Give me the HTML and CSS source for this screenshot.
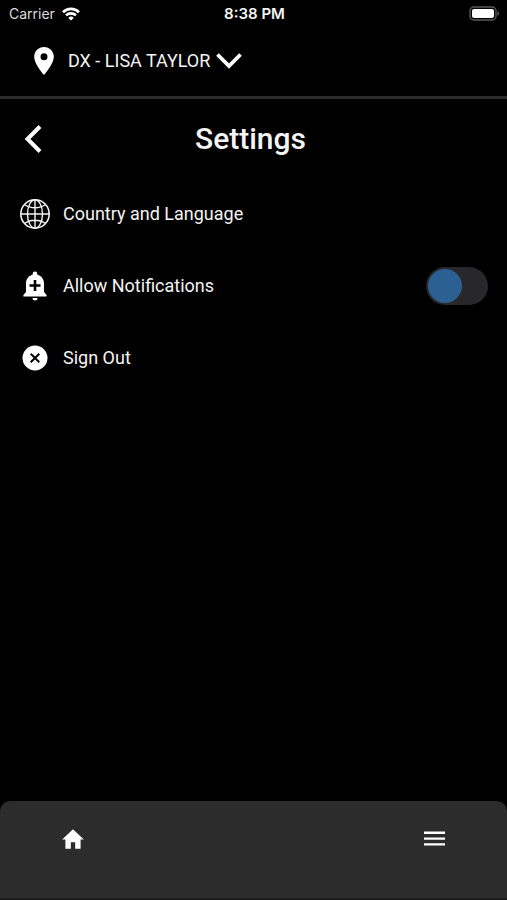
FILE: index.html
```html
<!DOCTYPE html>
<html lang="en">
<head>
    <meta charset="UTF-8">
    <meta name="viewport" content="width=device-width, initial-scale=1.0">
    <title>Settings</title>
    <link rel="stylesheet" href="styles.css">
</head>
<body>
    <!-- Status bar -->
    <div class="status-bar">
        <div class="carrier">
            <span>Carrier</span>
            <svg width="18" height="14" viewBox="0 0 18 14" fill="none" stroke="#fff" stroke-width="2.6">
                <path d="M1 5.2a11.4 11.4 0 0 1 16 0"/>
                <path d="M4 8.4a7.1 7.1 0 0 1 10 0"/>
                <path d="M9 13.6L6.3 10.9a3.8 3.8 0 0 1 5.4 0z" fill="#fff" stroke="none"/>
            </svg>
        </div>
        <span class="time">8:38 PM</span>
        <svg class="battery" width="31" height="15" viewBox="0 0 31 15">
            <rect x="1" y="1" width="26" height="13" rx="4" fill="none" stroke="#5a5a5a" stroke-width="1.4"/>
            <rect x="3" y="3" width="22" height="9" rx="2" fill="#fff"/>
            <path d="M28.5 5v5a2.7 2.7 0 0 0 0-5z" fill="#5a5a5a"/>
        </svg>
    </div>

    <!-- Location picker -->
    <header class="location-bar">
        <button class="location" type="button">
            <svg width="20" height="28" viewBox="5 2 14 20" fill="#fff">
                <path d="M12 2C8.1 2 5 5.1 5 9c0 5.2 7 13 7 13s7-7.8 7-13c0-3.9-3.1-7-7-7zm0 9.5a2.5 2.5 0 1 1 0-5 2.5 2.5 0 0 1 0 5z"/>
            </svg>
            <span class="location-name">DX - LISA TAYLOR</span>
            <svg width="26" height="16" viewBox="0 0 26 16" fill="none" stroke="#fff" stroke-width="3.8">
                <path d="M1.5 1.5L13 13L24.5 1.5"/>
            </svg>
        </button>
    </header>

    <main>
        <div class="title-row">
            <button class="back" type="button" aria-label="Back">
                <svg width="18" height="28" viewBox="0 0 18 28" fill="none" stroke="#fff" stroke-width="4">
                    <path d="M16 1.5L3.5 14L16 26.5"/>
                </svg>
            </button>
            <h1>Settings</h1>
        </div>

        <ul class="settings">
            <li>
                <a class="row" href="#country">
                    <svg class="row-icon" viewBox="0 0 30 30" fill="none" stroke="#f4f4f4" stroke-width="1.4">
                        <circle cx="15" cy="15" r="14.2" stroke-width="1.6"/>
                        <ellipse cx="15" cy="15" rx="7.5" ry="14.2"/>
                        <path d="M15 1v28M1 15h28M4.5 5.5c6 4.4 15 4.4 21 0M4.5 24.5c6-4.4 15-4.4 21 0"/>
                    </svg>
                    <span>Country and Language</span>
                </a>
            </li>
            <li>
                <label class="row">
                    <svg class="row-icon" viewBox="0 0 30 30">
                        <path fill="#fff" d="M15 .5a2.4 2.4 0 0 1 2.4 2.4v.8c4.2 1 6.6 4.5 6.6 8.8V21l2.6 3v1.5H3.4V24L6 21v-8.5c0-4.3 2.4-7.8 6.6-8.8v-.8A2.4 2.4 0 0 1 15 .5zM12.500 27h5a2.5 2.5 0 0 1-5 0z"/>
                        <path stroke="#000" stroke-width="2.6" d="M15 9v11M9.5 14.5h11"/>
                    </svg>
                    <span>Allow Notifications</span>
                    <input class="switch" type="checkbox" role="switch">
                </label>
            </li>
            <li>
                <button class="row" type="button">
                    <svg class="row-icon" viewBox="0 0 30 30">
                        <circle cx="15" cy="15" r="12.5" fill="#fff"/>
                        <path stroke="#000" stroke-width="2" d="M10.7 10.7l8.6 8.6M19.3 10.7l-8.6 8.6"/>
                    </svg>
                    <span>Sign Out</span>
                </button>
            </li>
        </ul>
    </main>

    <!-- Bottom navigation -->
    <nav class="bottom-nav">
        <a href="#home" aria-label="Home">
            <svg width="26" height="26" viewBox="0 0 24 24" fill="#fff">
                <path d="M10 21v-6h4v6h5v-8.5h3L12 3 2 12.5h3V21z"/>
            </svg>
        </a>
        <button type="button" aria-label="Menu">
            <svg width="26" height="26" viewBox="0 0 26 26" stroke="#fff" stroke-width="2.4">
                <path d="M3 6.8h21M3 12.6h21M3 18.4h21"/>
            </svg>
        </button>
    </nav>
</body>
</html>
```

FILE: styles.css
```css
* {
    box-sizing: border-box;
}
body {
    margin: 0;
    min-height: 100vh;
    display: flex;
    flex-direction: column;
    background: #000;
    color: #f4f4f4;
    font-family: Roboto, "Liberation Sans", sans-serif;
    font-size: 18px;
    line-height: 24px;
}
button {
    padding: 0;
    border: none;
    background: none;
    color: inherit;
    font: inherit;
    cursor: pointer;
}
a {
    color: inherit;
    text-decoration: none;
}
svg {
    display: block;
    flex: none;
}
main {
    flex: 1;
}

/* Status bar */
.status-bar {
    display: grid;
    grid-template-columns: 1fr auto 1fr;
    align-items: center;
    height: 27px;
    padding: 0 7px 0 9px;
    font-family: Inter, "Liberation Sans", sans-serif;
    font-size: 14px;
}
.carrier {
    display: flex;
    align-items: center;
    gap: 7px;
    color: #ddd;
}
.time {
    font-size: 15px;
    font-weight: 600;
}
.battery {
    justify-self: end;
}

/* Location picker */
.location-bar {
    height: 72px;
    padding: 0 34px;
    border-bottom: 3px solid #2c2c2c;
}
.location {
    display: flex;
    align-items: center;
    height: 68px;
}
.location-name {
    margin: 0 6px 0 14px;
}

/* Title */
.title-row {
    display: grid;
    grid-template-columns: 66px 1fr 72px;
    align-items: center;
    height: 79px;
}
.back {
    justify-self: center;
}
h1 {
    margin: 0;
    font-size: 30px;
    line-height: 40px;
    font-weight: 500;
    text-align: center;
}

/* Settings list */
.settings {
    list-style: none;
    margin: 0;
    padding: 0;
}
.row {
    display: flex;
    align-items: center;
    gap: 13px;
    width: 100%;
    height: 72px;
    padding: 0 19px 0 20px;
    cursor: pointer;
}
.row-icon {
    width: 30px;
    height: 30px;
}
.switch {
    appearance: none;
    width: 62px;
    height: 38px;
    margin: 0 0 0 auto;
    padding: 2px;
    border-radius: 19px;
    background: #28282a;
    cursor: pointer;
}
.switch::before {
    content: "";
    display: block;
    width: 34px;
    height: 34px;
    border-radius: 50%;
    background: #2c6092;
}
.switch:checked::before {
    margin-left: auto;
}

/* Bottom navigation */
.bottom-nav {
    display: flex;
    justify-content: space-between;
    align-items: flex-start;
    height: 99px;
    padding: 25px 60px 0;
    border-bottom: 2px solid #1f1a1c;
    border-radius: 10px 10px 0 0;
    background: #2c2c2c;
}
```
